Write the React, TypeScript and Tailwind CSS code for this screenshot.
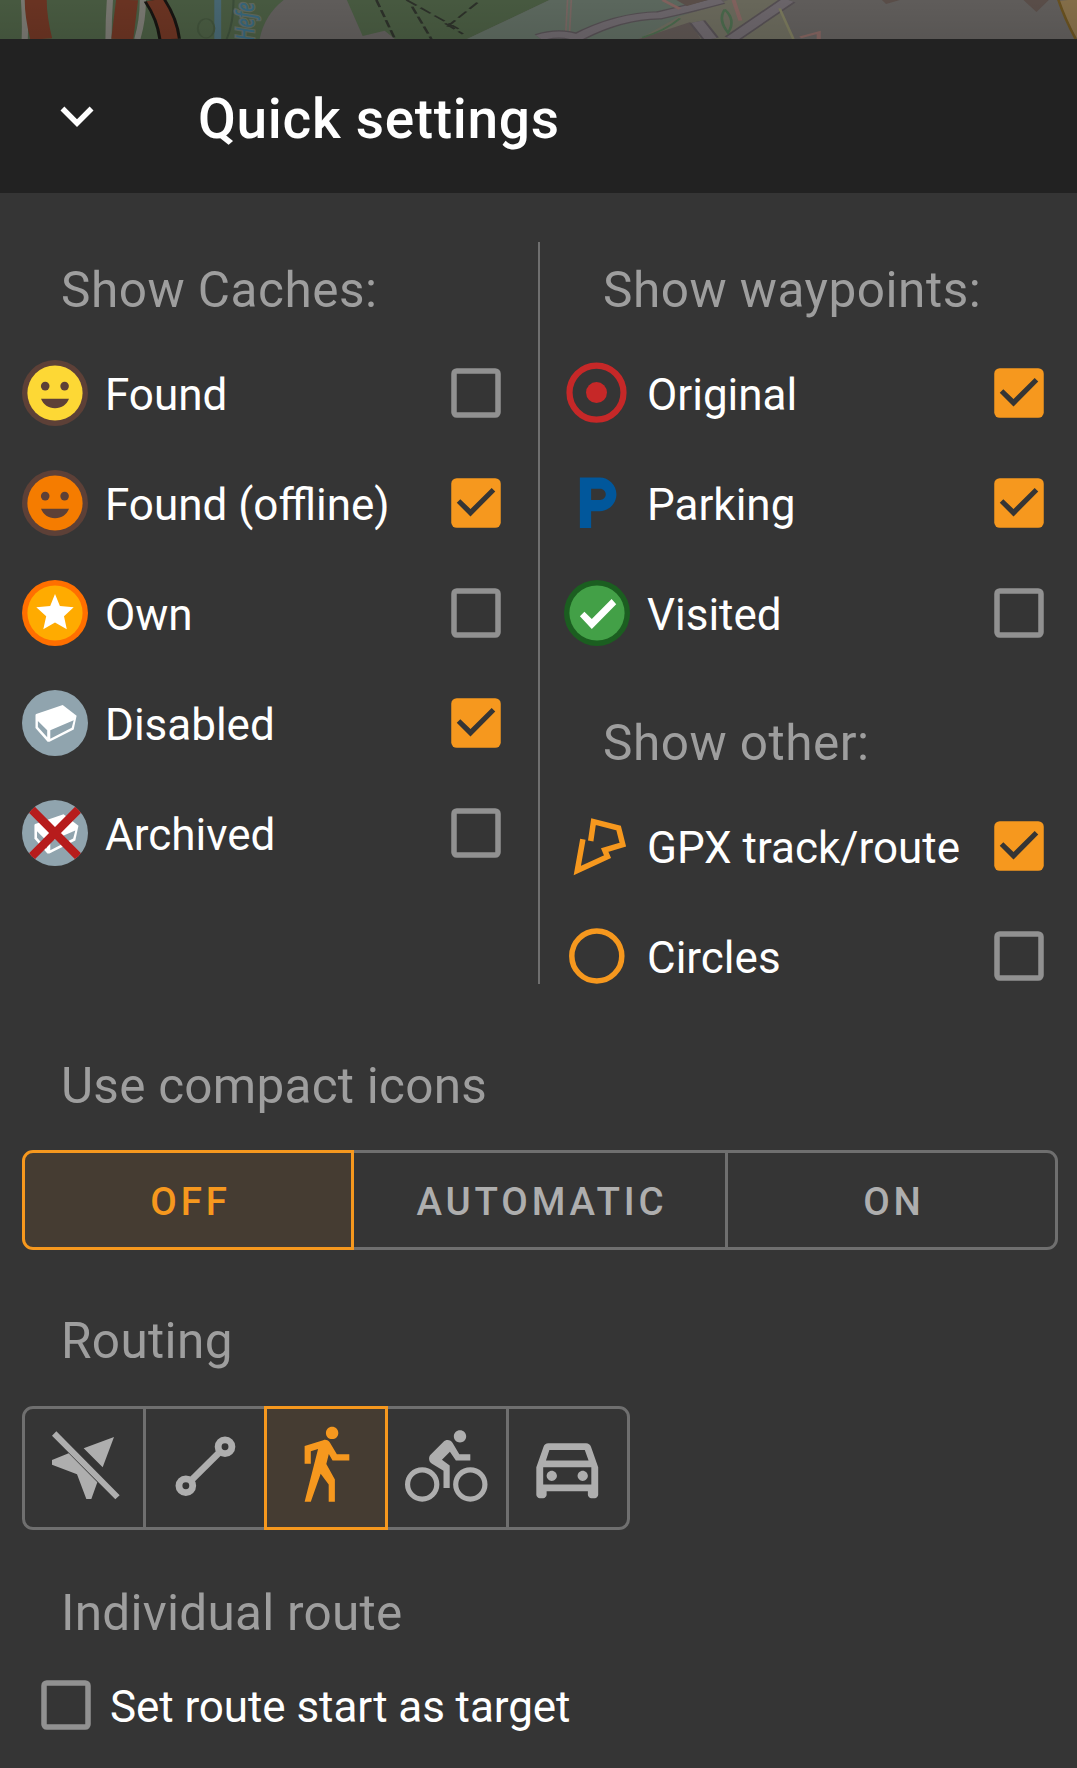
import type { ReactNode } from "react";
import { MdLocalParking } from "react-icons/md";

function Badge({ children }: { children: ReactNode }) {
  return (
    <svg className="size-[66px] shrink-0" viewBox="0 0 66 66">
      {children}
    </svg>
  );
}

function Smiley({ fill }: { fill: string }) {
  return (
    <Badge>
      <circle cx="33" cy="33" r="33" fill="#5d4037" />
      <circle cx="33" cy="33" r="27.6" fill={fill} />
      <g fill="#5d4037">
        <circle cx="23.2" cy="26.1" r="4.3" />
        <circle cx="42.6" cy="26.1" r="4.3" />
        <path d="M19 38.7h28C44.8 44.5 39.600 48.200 33 48.200S21.200 44.500 19 38.700z" />
      </g>
    </Badge>
  );
}

function StarIcon() {
  return (
    <Badge>
      <circle cx="33" cy="33" r="33" fill="#ff6f00" />
      <circle cx="33" cy="33" r="27.6" fill="#ffab00" />
      <path d="M33 14l4.900 12.100 13.800 1.200-9.700 9 2.800 13-11.800-6.800-11.700 6.800 2.900-13-9.900-9 13.900-1.200z" fill="#fff" />
    </Badge>
  );
}

function Container() {
  return (
    <>
      <path
        d="M14.200 24L40.700 15 54.600 25.800 51.700 39.500 27.500 51.700H25.600L13.500 37.900V24.700z"
        fill="#fff"
        strokeLinejoin="round"
      />
      <path d="M15.900 31V37L25.200 47.300V40.300zM28.300 40.300L51.700 30.200 49.700 37.700 28.300 48.700z" fill="#90a4ae" />
    </>
  );
}

function DisabledIcon() {
  return (
    <Badge>
      <circle cx="33" cy="33" r="33" fill="#90a4ae" />
      <Container />
    </Badge>
  );
}

function ArchivedIcon() {
  return (
    <Badge>
      <clipPath id="disc">
        <circle cx="33" cy="33" r="33" />
      </clipPath>
      <circle cx="33" cy="33" r="33" fill="#90a4ae" />
      <g transform="translate(-2 -1.800) scale(1.070)">
        <Container />
      </g>
      <path
        d="M9.700 9.500L56.300 56.500M56.300 9.500L9.700 56.500"
        stroke="#b71c1c"
        strokeWidth="8.300"
        clipPath="url(#disc)"
      />
    </Badge>
  );
}

function OriginalIcon() {
  return (
    <Badge>
      <circle cx="32.500" cy="32.600" r="27" fill="none" stroke="#c62828" strokeWidth="6.200" />
      <circle cx="32.500" cy="32.600" r="10.500" fill="#c62828" />
    </Badge>
  );
}

function VisitedIcon() {
  return (
    <Badge>
      <circle cx="33" cy="33" r="33" fill="#1b5e20" />
      <circle cx="33" cy="33" r="27.600" fill="#43a047" />
      <path d="M15.900 36.300L20.400 31.700 27.800 38.900 47.600 19 52.200 24.300 27.800 49z" fill="#fff" />
    </Badge>
  );
}

function TrackIcon() {
  return (
    <Badge>
      <path
        d="M18.900 26.300L13.300 57.500 43.500 43.700 40.700 37 58.800 31.700 54.600 15 29.500 8.700 26.700 28"
        fill="none"
        stroke="#f6981e"
        strokeWidth="5.500"
        strokeMiterlimit="10"
      />
    </Badge>
  );
}

function CircleIcon() {
  return (
    <Badge>
      <circle cx="32.800" cy="33" r="25" fill="none" stroke="#f6981e" strokeWidth="5.500" />
    </Badge>
  );
}

function Checkbox({ checked }: { checked: boolean }) {
  return (
    <svg className="size-[66px] shrink-0" viewBox="0 0 24 24">
      {checked ? (
        <>
          <rect x="3" y="3" width="18" height="18" rx="2" fill="#f6981e" />
          <path d="M10 16.900l-5-5 1.300-1.300L10 14.200l7.700-7.700L19 7.800z" fill="#353535" />
        </>
      ) : (
        <rect x="4" y="4" width="16" height="16" rx="1" fill="none" stroke="#919191" strokeWidth="2" />
      )}
    </svg>
  );
}

function Row({ icon, label, checked }: { icon: ReactNode; label: string; checked: boolean }) {
  return (
    <label className="flex h-[110px] items-center">
      {icon}
      <span className="grow pt-1 pl-[17px] text-[44px] leading-[52px] whitespace-nowrap text-white">{label}</span>
      <Checkbox checked={checked} />
    </label>
  );
}

function Heading({ children, className = "" }: { children: ReactNode; className?: string }) {
  return (
    <h2 className={`flex h-24 items-center pl-[39px] text-[49.500px] whitespace-nowrap text-[#9e9e9e] ${className}`}>
      {children}
    </h2>
  );
}

function MapStrip() {
  return (
    <svg className="block h-[39px] w-full" viewBox="0 0 1568 117" preserveAspectRatio="none">
      <defs>
        <linearGradient id="shade" x1="0" y1="0" x2="0" y2="1">
          <stop offset="0" stopColor="#000" stopOpacity="0" />
          <stop offset="1" stopColor="#000" stopOpacity="0.070" />
        </linearGradient>
      </defs>
      <rect width="1568" height="117" fill="#5f5c5a" />
      <path d="M0 0H413Q385 45 378 117H0z" fill="#475940" />
      <path d="M505 0H800L680 117H575L560 92 528 108z" fill="#475940" />
      <path d="M800 0H985L1010 30 935 117H680z" fill="#5b675d" />
      <path d="M1060 0L1030 25 990 48 930 117H1155L1135 25 1140 0z" fill="#68675a" />
      <path d="M930 117L1005 66 1020 117z" fill="#5b5350" />
      <g fill="none">
        <path d="M35 0Q37 60 36 117M160 0Q158 60 158 117M208 0Q208 60 200 117" stroke="#77766f" strokeWidth="9" />
        <path d="M52 0Q52 50 60 117M185 0Q182 50 178 117" stroke="#693322" strokeWidth="32" />
        <path d="M225 0Q243 55 247 117" stroke="#161411" strokeWidth="33" />
        <path d="M225 0Q243 55 247 117" stroke="#693322" strokeWidth="24" />
        <path d="M317 0V117" stroke="#466570" strokeWidth="10" />
        <path d="M340 0Q340 70 330 117" stroke="#3b4c38" strokeWidth="3" />
        <ellipse cx="300" cy="85" rx="12" ry="29" stroke="#3f5039" strokeWidth="3" />
        <path d="M548 0L575 117M592 0L672 92M600 20L628 117M695 8L648 85M648 70L674 102" stroke="#2c3029" strokeWidth="4" strokeDasharray="22 9" />
        <path d="M829 0L826 117" stroke="#75635f" strokeWidth="8" />
        <path d="M829 0L826 117" stroke="#5d6a5f" strokeWidth="3" />
        <path d="M785 113Q815 94 840 113Q900 48 960 46Q1010 22 1050 0M1148 0L1065 117M1015 65L1035 117" stroke="#534d51" strokeWidth="25" />
        <path d="M785 113Q815 94 840 113Q900 48 960 46Q1010 22 1050 0M1148 0L1065 117M1015 65L1035 117" stroke="#6a6469" strokeWidth="18" />
        <path d="M965 0L990 27M1068 0L1078 62M1165 112L1192 97V117" stroke="#80615d" strokeWidth="6" />
        <path d="M1055 28Q1072 60 1060 98Q1045 60 1055 28M990 55Q970 90 935 113" stroke="#48664a" strokeWidth="4" />
        <path d="M1135 25L1155 117" stroke="#77765a" strokeWidth="4" />
        <path d="M1555 0Q1563 50 1582 117" stroke="#836d48" strokeWidth="26" />
        <path d="M1541 0Q1550 55 1566 117" stroke="#67501f" strokeWidth="4" />
      </g>
      <path d="M985 0H1030L1000 18z M1284 0H1310L1290 12z M1490 0H1527L1509 36z" fill="#594d48" />
      <text
        transform="translate(370 122) scale(1.456 2.300) rotate(-90)"
        fill="#35647a"
        stroke="#5c665c"
        strokeWidth="3"
        paintOrder="stroke"
        fontSize="25"
        fontStyle="italic"
        fontFamily="Noto Sans"
      >
        Hefe
      </text>
      <rect width="1568" height="117" fill="url(#shade)" />
    </svg>
  );
}

const segment = "flex items-center justify-center border-[3px]";
const textSegment = "pt-[4.500px] pl-[5px]";
const idle = "border-[#6f6f6f] text-[#aeaeae]";
const active = "z-10 border-[#f6981e] bg-[#453c32] text-[#f6981e]";

function RouteIcon({
  children,
  viewBox = "0 0 24 24",
  className = "",
}: {
  children: ReactNode;
  viewBox?: string;
  className?: string;
}) {
  return (
    <svg className={`size-[82.500px] shrink-0 ${className}`} viewBox={viewBox} fill="currentColor">
      {children}
    </svg>
  );
}

export default function App() {
  return (
    <div className="flex h-[1768px] w-[1077px] flex-col overflow-hidden bg-[#353535] font-['Roboto',sans-serif]">
      <MapStrip />
      <header className="flex h-[154px] shrink-0 items-center bg-[#222222] pl-11">
        <svg className="size-[66px]" viewBox="0 0 24 24" fill="#fff">
          <path d="M7.410 8.590 12 13.170l4.590-4.580L18 10l-6 6-6-6z" />
        </svg>
        <h1 className="pt-1.5 pl-[88px] text-[55px] leading-none font-medium tracking-[0.0125em] whitespace-nowrap text-white">
          Quick settings
        </h1>
      </header>

      <main>
        <div className="flex h-[818px] pt-[49px]">
          <section className="w-[538px] pr-[29px] pl-[22px]">
            <Heading className="tracking-[0.5px]">Show Caches:</Heading>
            <Row icon={<Smiley fill="#fdd835" />} label="Found" checked={false} />
            <Row icon={<Smiley fill="#f57c00" />} label="Found (offline)" checked />
            <Row icon={<StarIcon />} label="Own" checked={false} />
            <Row icon={<DisabledIcon />} label="Disabled" checked />
            <Row icon={<ArchivedIcon />} label="Archived" checked={false} />
          </section>
          <div className="h-[742px] w-0.5 bg-[#6f6f6f]" />
          <section className="w-[537px] pr-[25px] pl-6">
            <Heading className="tracking-[0.5px]">Show waypoints:</Heading>
            <Row icon={<OriginalIcon />} label="Original" checked />
            <Row
              icon={<MdLocalParking className="-mx-[0.75px] size-[67.500px] shrink-0 text-[#01579b]" />}
              label="Parking"
              checked
            />
            <Row icon={<VisitedIcon />} label="Visited" checked={false} />
            <Heading className="mt-[27px] tracking-[0.5px]">Show other:</Heading>
            <Row icon={<TrackIcon />} label="GPX track/route" checked />
            <Row icon={<CircleIcon />} label="Circles" checked={false} />
          </section>
        </div>

        <section className="px-[22px] pt-[27px]">
          <Heading className="tracking-[0.25px]">Use compact icons</Heading>
          <div className="mt-4 flex h-[100px] w-[1036px] text-[38.500px] font-medium tracking-[0.1em]">
            <button className={`${segment} ${textSegment} ${active} w-[332px] rounded-l-[11px]`}>OFF</button>
            <button className={`${segment} ${textSegment} ${idle} -ml-[3px] w-[377px]`}>AUTOMATIC</button>
            <button className={`${segment} ${textSegment} ${idle} -ml-[3px] w-[333px] rounded-r-[11px]`}>ON</button>
          </div>
        </section>

        <section className="px-[22px] pt-[43px]">
          <Heading className="tracking-[0.35px]">Routing</Heading>
          <div className="mt-[17px] flex h-[124px]">
            <button className={`${segment} ${idle} w-[124px] rounded-l-[11px]`}>
              <RouteIcon viewBox="0 0 247.500 247.500">
                <path d="M77 79L27 99v14l75 29 28 74h15l18-50zM122 64l91-34-34 91zM27 26L40 13 230 205 217 217z" />
              </RouteIcon>
            </button>
            <button className={`${segment} ${idle} -ml-[3px] w-[124px]`}>
              <RouteIcon>
                <g fill="none" stroke="currentColor">
                  <circle cx="17.750" cy="5.750" r="2" strokeWidth="2" />
                  <circle cx="6.350" cy="17.100" r="2" strokeWidth="2" />
                  <path d="M15.900 7.600L8.200 15.250" strokeWidth="1.900" />
                </g>
              </RouteIcon>
            </button>
            <button className={`${segment} ${active} -ml-[3px] w-[124px]`}>
              <RouteIcon className="-mt-[1.500px] -ml-[1.500px]">
                <path d="M14.120,10H19V8.200H15.380L13.380,4.870C13.080,4.370 12.540,4.030 11.920,4.030C11.740,4.030 11.580,4.060 11.420,4.110L6,5.800V11H7.800V7.330L9.910,6.670L6,22H7.800L10.670,13.890L13,17V22H14.800V15.590L12.310,11.050L13.040,8.180M14,3.800C15,3.800 15.800,3 15.800,2C15.800,1 15,0.200 14,0.200C13,0.200 12.200,1 12.200,2C12.200,3 13,3.800 14,3.800Z" />
              </RouteIcon>
            </button>
            <button className={`${segment} ${idle} -ml-[3px] w-[124px]`}>
              <RouteIcon className="-mt-[1.500px] -ml-[1.500px]">
                <path d="M5,20.500A3.500,3.500 0 0,1 1.500,17A3.500,3.500 0 0,1 5,13.500A3.500,3.500 0 0,1 8.500,17A3.500,3.500 0 0,1 5,20.500M5,12A5,5 0 0,0 0,17A5,5 0 0,0 5,22A5,5 0 0,0 10,17A5,5 0 0,0 5,12M14.800,10H19V8.200H15.800L13.860,4.930C13.570,4.430 13,4.100 12.400,4.100C11.930,4.100 11.500,4.290 11.200,4.600L7.500,8.290C7.190,8.600 7,9 7,9.500C7,10.130 7.330,10.660 7.850,10.970L11.200,13V18H13V11.500L10.750,9.850L13.070,7.500M19,20.500A3.500,3.500 0 0,1 15.500,17A3.500,3.500 0 0,1 19,13.500A3.500,3.500 0 0,1 22.500,17A3.500,3.500 0 0,1 19,20.500M19,12A5,5 0 0,0 14,17A5,5 0 0,0 19,22A5,5 0 0,0 24,17A5,5 0 0,0 19,12M16,4.800C17,4.800 17.800,4 17.800,3C17.800,2 17,1.200 16,1.200C15,1.200 14.200,2 14.200,3C14.200,4 15,4.800 16,4.800Z" />
              </RouteIcon>
            </button>
            <button className={`${segment} ${idle} -ml-[3px] w-[124px] rounded-r-[11px]`}>
              <RouteIcon className="-mt-[1.500px] -ml-[1.500px]">
                <path d="M18.900,6C18.700,5.400 18.100,5 17.500,5H6.500C5.800,5 5.300,5.400 5.100,6L3,12V20C3,20.500 3.500,21 4,21H5C5.500,21 6,20.500 6,20V19H18V20C18,20.500 18.500,21 19,21H20C20.500,21 21,20.500 21,20V12L18.900,6M6.800,7H17.100L18.200,10H5.800L6.800,7M19,17H5V12H19V17M7.500,13C8.300,13 9,13.700 9,14.500C9,15.300 8.300,16 7.500,16C6.700,16 6,15.300 6,14.500C6,13.700 6.700,13 7.500,13M16.500,13C17.300,13 18,13.700 18,14.500C18,15.300 17.300,16 16.500,16C15.700,16 15,15.300 15,14.500C15,13.700 15.700,13 16.500,13Z" />
              </RouteIcon>
            </button>
          </div>
        </section>

        <section className="px-[22px] pt-[35px]">
          <Heading className="tracking-[0.25px]">Individual route</Heading>
          <label className="flex h-[88px] items-center pl-[11px]">
            <Checkbox checked={false} />
            <span className="pt-1 pl-[11px] text-[44px] leading-[52px] tracking-[-0.08px] whitespace-nowrap text-white">
              Set route start as target
            </span>
          </label>
        </section>
      </main>
    </div>
  );
}
